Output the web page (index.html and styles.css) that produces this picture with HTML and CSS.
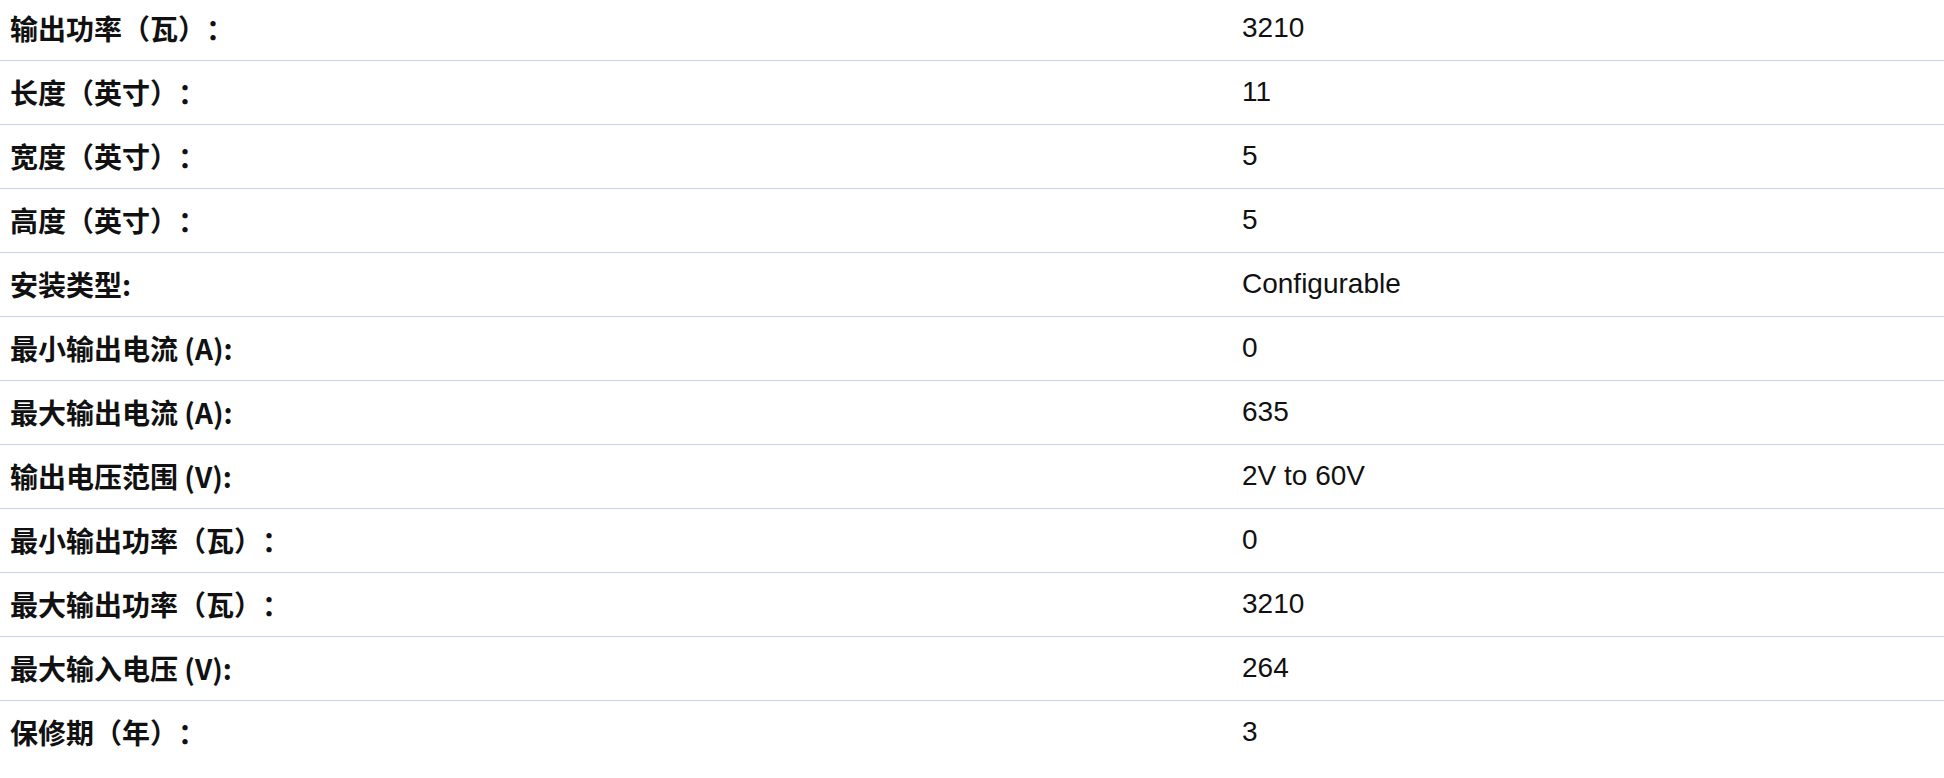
FILE: index.html
```html
<!DOCTYPE html>
<html lang="zh-CN">
<head>
<meta charset="utf-8">
<title>规格</title>
<link rel="stylesheet" href="styles.css">
</head>
<body>
<table class="specs">
  <tbody>
    <tr><th>输出功率（瓦）：</th><td>3210</td></tr>
    <tr><th>长度（英寸）：</th><td>11</td></tr>
    <tr><th>宽度（英寸）：</th><td>5</td></tr>
    <tr><th>高度（英寸）：</th><td>5</td></tr>
    <tr><th>安装类型:</th><td>Configurable</td></tr>
    <tr><th>最小输出电流 (A):</th><td>0</td></tr>
    <tr><th>最大输出电流 (A):</th><td>635</td></tr>
    <tr><th>输出电压范围 (V):</th><td>2V to 60V</td></tr>
    <tr><th>最小输出功率（瓦）：</th><td>0</td></tr>
    <tr><th>最大输出功率（瓦）：</th><td>3210</td></tr>
    <tr><th>最大输入电压 (V):</th><td>264</td></tr>
    <tr><th>保修期（年）：</th><td>3</td></tr>
  </tbody>
</table>
</body>
</html>
```
FILE: styles.css
```css
html, body {
  margin: 0;
  padding: 0;
  background: #ffffff;
}
.specs {
  width: 100%;
  border-collapse: collapse;
  table-layout: fixed;
  margin-top: -4px;
  color: #111111;
}
.specs tr {
  height: 64px;
  border-bottom: 1px solid #cbd5e1;
}
.specs tr:last-child {
  border-bottom: none;
}
.specs th {
  width: 1212px;
  padding: 0 10px;
  text-align: left;
  vertical-align: middle;
  font-family: "Noto Sans CJK SC", "Noto Sans", sans-serif;
  font-weight: 700;
  font-size: 28px;
  line-height: 1;
  text-spacing-trim: space-all;
}
.specs td {
  padding: 0 10px;
  vertical-align: middle;
  font-family: "Liberation Sans", Arial, sans-serif;
  font-size: 28px;
  line-height: 1;
}
```
